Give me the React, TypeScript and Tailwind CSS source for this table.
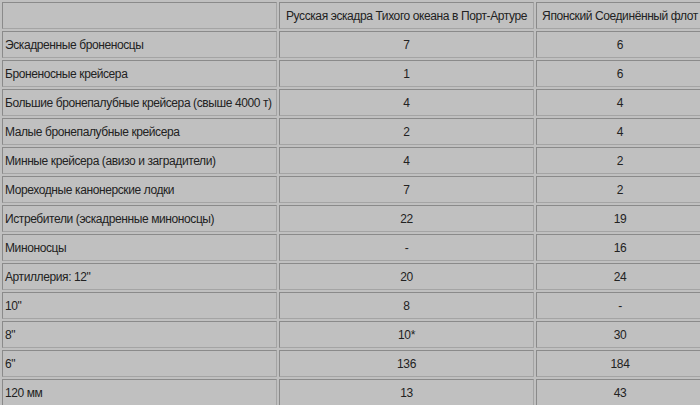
const rows: [string, string, string][] = [
  ["Эскадренные броненосцы", "7", "6"],
  ["Броненосные крейсера", "1", "6"],
  ["Большие бронепалубные крейсера (свыше 4000 т)", "4", "4"],
  ["Малые бронепалубные крейсера", "2", "4"],
  ["Минные крейсера (авизо и заградители)", "4", "2"],
  ["Мореходные канонерские лодки", "7", "2"],
  ["Истребители (эскадренные миноносцы)", "22", "19"],
  ["Миноносцы", "-", "16"],
  ["Артиллерия: 12\"", "20", "24"],
  ["10\"", "8", "-"],
  ["8\"", "10*", "30"],
  ["6\"", "136", "184"],
  ["120 мм", "13", "43"],
]

const cell =
  "border border-t-[#8a8a8a] border-l-[#8a8a8a] border-b-[#a4a4a4] border-r-[#a4a4a4] align-middle whitespace-nowrap"

export default function App() {
  return (
    <div className="w-[700px] h-[405px] overflow-hidden bg-[#c0c0c0]">
      <table
        className="table-fixed border-separate border-spacing-[2px] w-[706px] text-[12px] tracking-[-0.4px] text-[#222] leading-none"
        style={{ fontFamily: '"Liberation Sans", Arial, sans-serif' }}
      >
        <colgroup>
          <col className="w-[275px]" />
          <col className="w-[255px]" />
          <col className="w-[168px]" />
        </colgroup>
        <thead>
          <tr className="h-[27px]">
            <th className={cell}></th>
            <th className={`${cell} font-normal text-center`}>
              Русская эскадра Тихого океана в Порт-Артуре
            </th>
            <th className={`${cell} font-normal text-center`}>
              Японский Соединённый флот
            </th>
          </tr>
        </thead>
        <tbody>
          {rows.map(([name, ru, jp]) => (
            <tr key={name} className="h-[27px]">
              <td className={`${cell} pl-[2px] text-left`}>{name}</td>
              <td className={`${cell} text-center`}>{ru}</td>
              <td className={`${cell} text-center`}>{jp}</td>
            </tr>
          ))}
        </tbody>
      </table>
    </div>
  )
}
